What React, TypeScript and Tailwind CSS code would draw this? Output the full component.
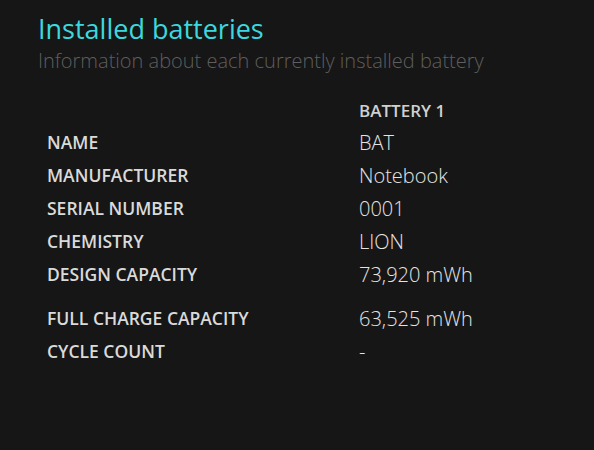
const rows: { label: string; value: string; gap?: boolean }[] = [
  { label: "Name", value: "BAT" },
  { label: "Manufacturer", value: "Notebook" },
  { label: "Serial number", value: "0001" },
  { label: "Chemistry", value: "LION" },
  { label: "Design capacity", value: "73,920 mWh" },
  { label: "Full charge capacity", value: "63,525 mWh", gap: true },
  { label: "Cycle count", value: "-" },
]

export default function App() {
  return (
    <main
      className="min-h-[450px] w-[594px] bg-[#161616] pl-[38px] pt-[10px]"
      style={{ fontFamily: '"Open Sans", "Noto Sans", sans-serif' }}
    >
      <h1 className="text-[27px] leading-[37px] text-[#3dd8df]">Installed batteries</h1>
      <p className="text-[20px] font-light leading-[28px] text-[#5e5e5e]">
        Information about each currently installed battery
      </p>

      <div className="mt-[24px] pl-[9px]">
        <div className="grid grid-cols-[312px_1fr]">
          <div />
          <div className="text-[17px] font-semibold leading-[24px] text-[#d0d0d0]">BATTERY 1</div>
        </div>

        <div className="mt-[3px] flex flex-col">
          {rows.map((row) => (
            <div
              key={row.label}
              className={`grid h-[33px] grid-cols-[312px_1fr] items-center ${row.gap ? "mt-[11px]" : ""}`}
            >
              <div className="text-[17.5px] font-semibold uppercase text-[#dadada]">{row.label}</div>
              <div className="text-[20px] font-light text-[#e4e4e4]">{row.value}</div>
            </div>
          ))}
        </div>
      </div>
    </main>
  )
}
